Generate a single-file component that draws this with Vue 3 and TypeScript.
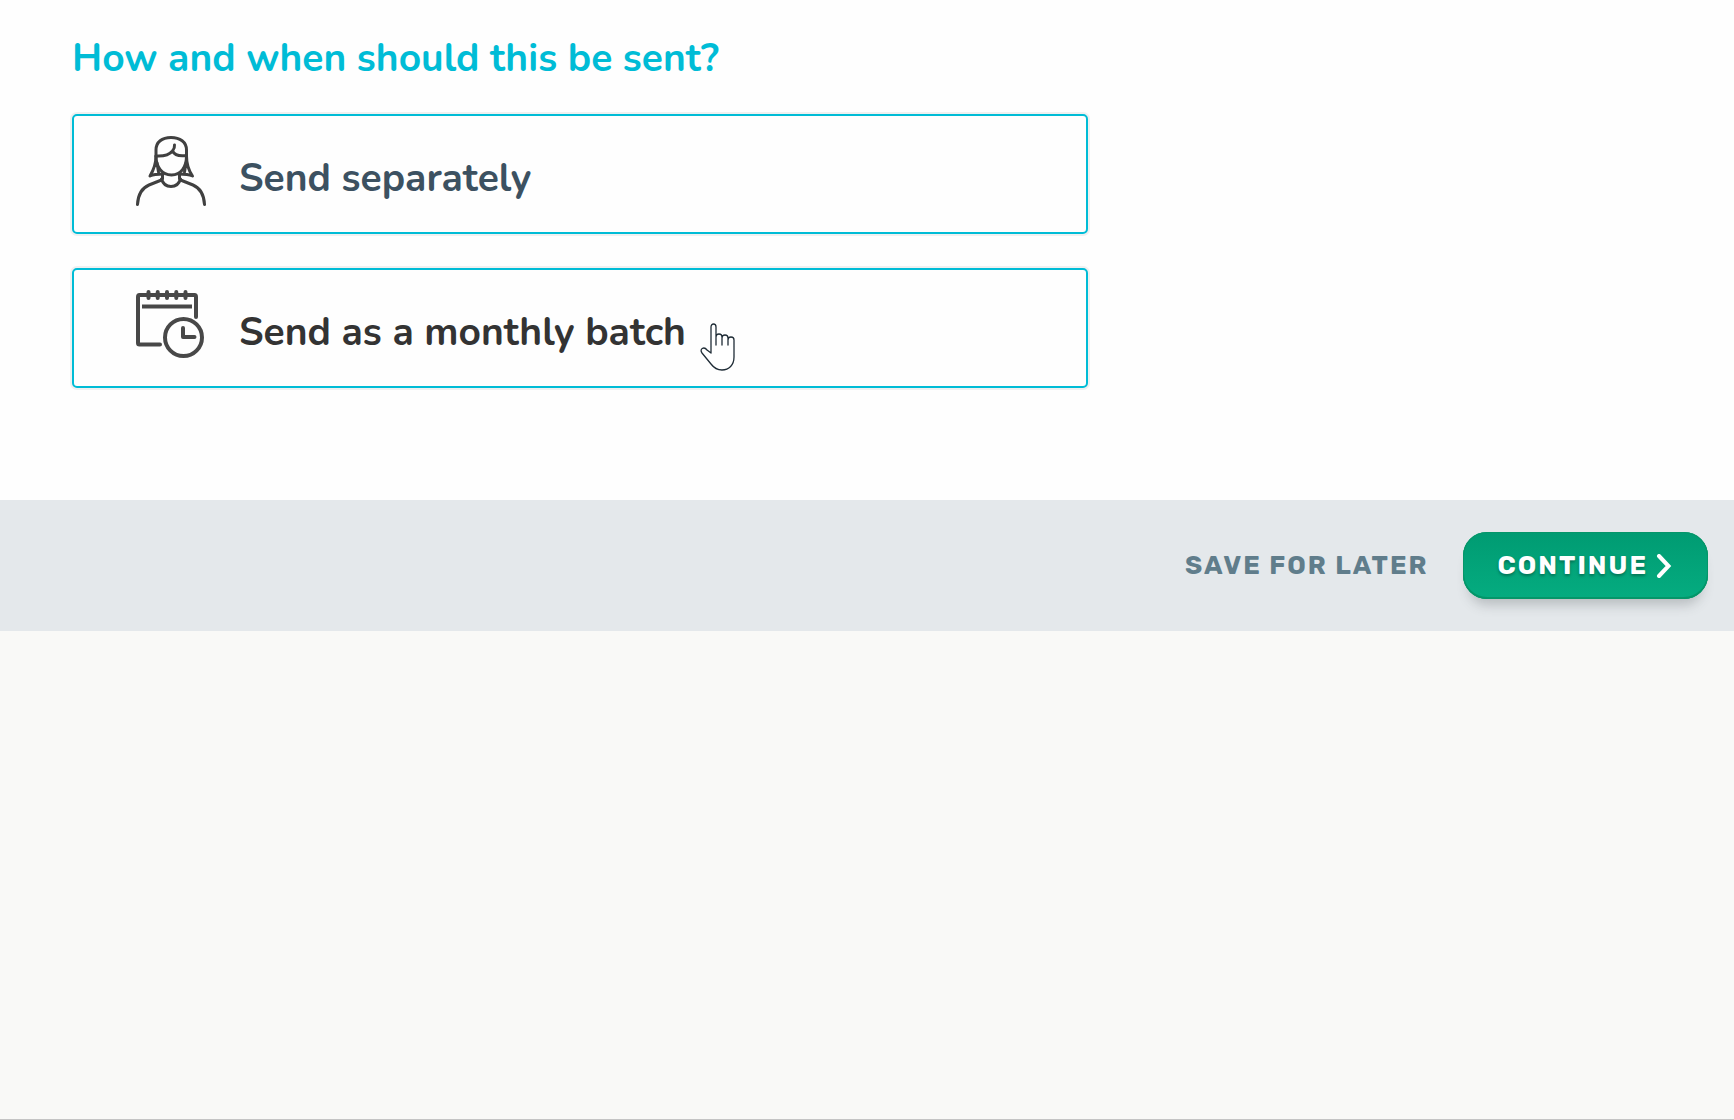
<script setup lang="ts">
import { ref } from 'vue'

type Delivery = 'separate' | 'batch'

const selected = ref<Delivery | null>(null)
</script>

<template>
  <div class="page">
    <main class="panel">
      <h1 class="title">How and when should this be sent?</h1>
      <div class="options">
        <button type="button" class="option" @click="selected = 'separate'">
          <svg class="icon" viewBox="0 0 70 70" aria-hidden="true">
            <g fill="none" stroke="#404040" stroke-width="3" stroke-linecap="round" stroke-linejoin="round">
              <path d="M20 20V14C20 6 26 1.500 35 1.500S50.500 6 50.500 14V20C50.500 31 45 39 35.500 39S20 31 20 20Z" />
              <path d="M20 20C28 20.500 34 18 36.500 15C38.500 19 44 20.500 50.500 19.500M36.500 15C38 13 38.800 11 38.500 9" />
              <path d="M20 20C20 27 17 35 14 40C18 38 22 38 27 38M50.500 20C50.500 27 53 35 56.500 40C52 38 48 38 43 38M21 27L22.500 36M50 27L48.500 36" />
              <path d="M26.500 38V43M43.500 38V43M25.500 43C27 48 31 50.500 35 50.500S43 48 44.500 43" />
              <path d="M1.500 68.500C2 59 6 52 13 49L25.500 44M68.500 68.500C68 59 64 52 57 49L44.500 44" />
            </g>
          </svg>
          <span class="label">Send separately</span>
        </button>

        <button type="button" class="option option-hover" @click="selected = 'batch'">
          <svg class="icon" viewBox="0 4 70 70" aria-hidden="true">
            <g fill="none" stroke="#484848" stroke-width="4" stroke-linecap="round" stroke-linejoin="round">
              <path d="M24 58.500H3.500C2.500 58.500 2 58 2 57V11C2 9.500 2.500 9 3.500 9H58.500C59.500 9 60 9.500 60 11V31" />
              <path d="M6 20.500H56" stroke-linecap="butt" />
              <path d="M12.500 6V12M21.700 6V12M31 6V12M40.300 6V12M49.500 6V12" />
              <circle cx="47.500" cy="51.500" r="18.500" />
              <path d="M47 42V51H58.500" />
            </g>
          </svg>
          <span class="label">Send as a monthly batch
            <svg class="pointer" viewBox="0 0 36 48" aria-hidden="true">
              <path
                d="M11 30V4C11 0 16 0 16 4V22V14C16 10 22 10 22 14V22V15C22 11 28 11 28 15V22V17C28 13 34 13 34 17V34C34 42 29 47 22 47C17 47 14 45 11 41L2 30C-1 26 4 23 7 27Z"
                fill="#fff" stroke="#1f2c36" stroke-width="1.300" stroke-linejoin="round"
              />
            </svg>
          </span>
        </button>
      </div>
    </main>

    <footer class="actions">
      <button type="button" class="save">SAVE FOR LATER</button>
      <button type="button" class="continue">
        CONTINUE
        <svg class="chevron" viewBox="0 0 16 24" aria-hidden="true">
          <path d="M3 2L12.500 12L3 22" fill="none" stroke="#fff" stroke-width="4" stroke-linecap="round" stroke-linejoin="miter" />
        </svg>
      </button>
    </footer>
  </div>
</template>

<style>
body {
  margin: 0;
}
</style>

<style scoped>
.page {
  box-sizing: border-box;
  min-height: 100vh;
  background: #f9f9f7;
  border-bottom: 1px solid #c4c4c4;
}

.panel {
  padding: 34px 72px 112px;
  background: #fefefe;
}

.title {
  margin: 0 0 30px;
  color: #00bcd6;
  font: 700 39px/50px Nunito, "Noto Sans", sans-serif;
}

.options {
  display: flex;
  flex-direction: column;
  gap: 34px;
  max-width: 1016px;
}

.option {
  display: flex;
  align-items: center;
  gap: 33px;
  box-sizing: border-box;
  height: 120px;
  padding: 0 62px;
  border: 2px solid #00bcd6;
  border-radius: 5px;
  background: #fefefe;
  box-shadow: 0 0 0 2px #f0f0f0;
  color: #3c5161;
  font: 700 39px/50px Nunito, "Noto Sans", sans-serif;
  text-align: left;
  cursor: pointer;
}

.option-hover {
  color: #333;
}

.icon {
  flex: none;
  width: 70px;
  height: 70px;
  margin-bottom: 6px;
}

.label {
  position: relative;
  margin-top: 10px;
}

.pointer {
  position: absolute;
  top: 15px;
  left: calc(100% + 14px);
  width: 36px;
  height: 48px;
}

.actions {
  display: flex;
  align-items: center;
  justify-content: flex-end;
  gap: 34px;
  box-sizing: border-box;
  min-height: 131px;
  padding: 32px 26px;
  background: #e4e8eb;
}

.save,
.continue {
  border: 0;
  font: 700 26px/30px Rubik, Inter, sans-serif;
  letter-spacing: 2px;
  cursor: pointer;
}

.save {
  padding: 0;
  background: none;
  color: #607d8b;
}

.continue {
  display: flex;
  align-items: center;
  gap: 8px;
  box-sizing: border-box;
  height: 67px;
  padding: 0 36px 0 35px;
  border-radius: 24px;
  background: linear-gradient(#009b72, #05ac80);
  box-shadow: inset 0 0 0 1px #059669, inset 0 -1px 0 1px #059669, 0 12px 12px -6px rgba(60, 70, 75, 0.26);
  color: #fff;
  text-shadow: 0 2px 3px rgba(0, 0, 0, 0.3);
}

.chevron {
  width: 16px;
  height: 24px;
}
</style>
